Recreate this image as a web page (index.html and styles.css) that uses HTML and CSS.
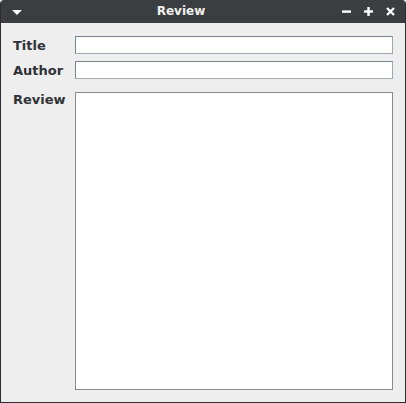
FILE: index.html
```html
<!DOCTYPE html>
<html lang="en">
<head>
    <meta charset="UTF-8">
    <title>Review</title>
    <link rel="stylesheet" href="styles.css">
</head>
<body>
    <div class="window">
        <div class="titlebar">
            <span class="menu-arrow"></span>
            <span class="title">Review</span>
            <div class="controls">
                <svg width="9" height="9" viewBox="0 0 9 9"><rect x="0" y="3.4" width="9" height="2.4" fill="#fff"/></svg>
                <svg width="9" height="9" viewBox="0 0 9 9"><rect x="0" y="3.3" width="9" height="2.4" fill="#fff"/><rect x="3.3" y="0" width="2.4" height="9" fill="#fff"/></svg>
                <svg width="9" height="9" viewBox="0 0 9 9"><path d="M1 1 L8 8 M8 1 L1 8" stroke="#fff" stroke-width="2.3"/></svg>
            </div>
        </div>
        <div class="form">
            <div class="row">
                <label class="label">Title</label>
                <div class="field"></div>
            </div>
            <div class="row">
                <label class="label">Author</label>
                <div class="field"></div>
            </div>
            <div class="row row-review">
                <label class="label">Review</label>
                <div class="textarea"></div>
            </div>
        </div>
    </div>
</body>
</html>
```

FILE: styles.css
```css
* {
    margin: 0;
    padding: 0;
    box-sizing: border-box;
}

body {
    width: 406px;
    height: 403px;
    background: #ffffff;
    font-family: 'DejaVu Sans', sans-serif;
}

.window {
    width: 406px;
    height: 403px;
    display: flex;
    flex-direction: column;
    background: #eeeeee;
    border: 1px solid #2b2d2e;
    border-top: none;
    border-radius: 4px 4px 0 0;
    overflow: hidden;
}

/* Title bar */
.titlebar {
    height: 23px;
    background: #3b3e40;
    display: flex;
    align-items: center;
    position: relative;
    padding: 0 10px 0 11px;
    flex-shrink: 0;
}

.menu-arrow {
    width: 0;
    height: 0;
    border-left: 5px solid transparent;
    border-right: 5px solid transparent;
    border-top: 5px solid #ffffff;
    margin-top: 1px;
}

.title {
    position: absolute;
    left: 0;
    right: 44px;
    text-align: center;
    color: #f0f0f0;
    font-weight: bold;
    font-size: 12px;
    line-height: 23px;
    pointer-events: none;
}

.controls {
    margin-left: auto;
    display: flex;
    gap: 13px;
}

.controls svg {
    display: block;
}

/* Form */
.form {
    flex: 1;
    display: flex;
    flex-direction: column;
    gap: 7px;
    padding: 13px 12px 12px 12px;
}

.row {
    display: flex;
    align-items: center;
}

.row-review {
    flex: 1;
    align-items: stretch;
    margin-top: 6px;
}

.label {
    width: 62px;
    font-weight: bold;
    font-size: 13px;
    color: #303236;
}

.row-review .label {
    line-height: 15px;
}

.field {
    flex: 1;
    height: 18px;
    background: #ffffff;
    border: 1px solid #7a8591;
    border-right-color: #a0a8b0;
    border-bottom-color: #a0a8b0;
}

.textarea {
    flex: 1;
    background: #ffffff;
    border: 1px solid #8a8a8a;
}
```
